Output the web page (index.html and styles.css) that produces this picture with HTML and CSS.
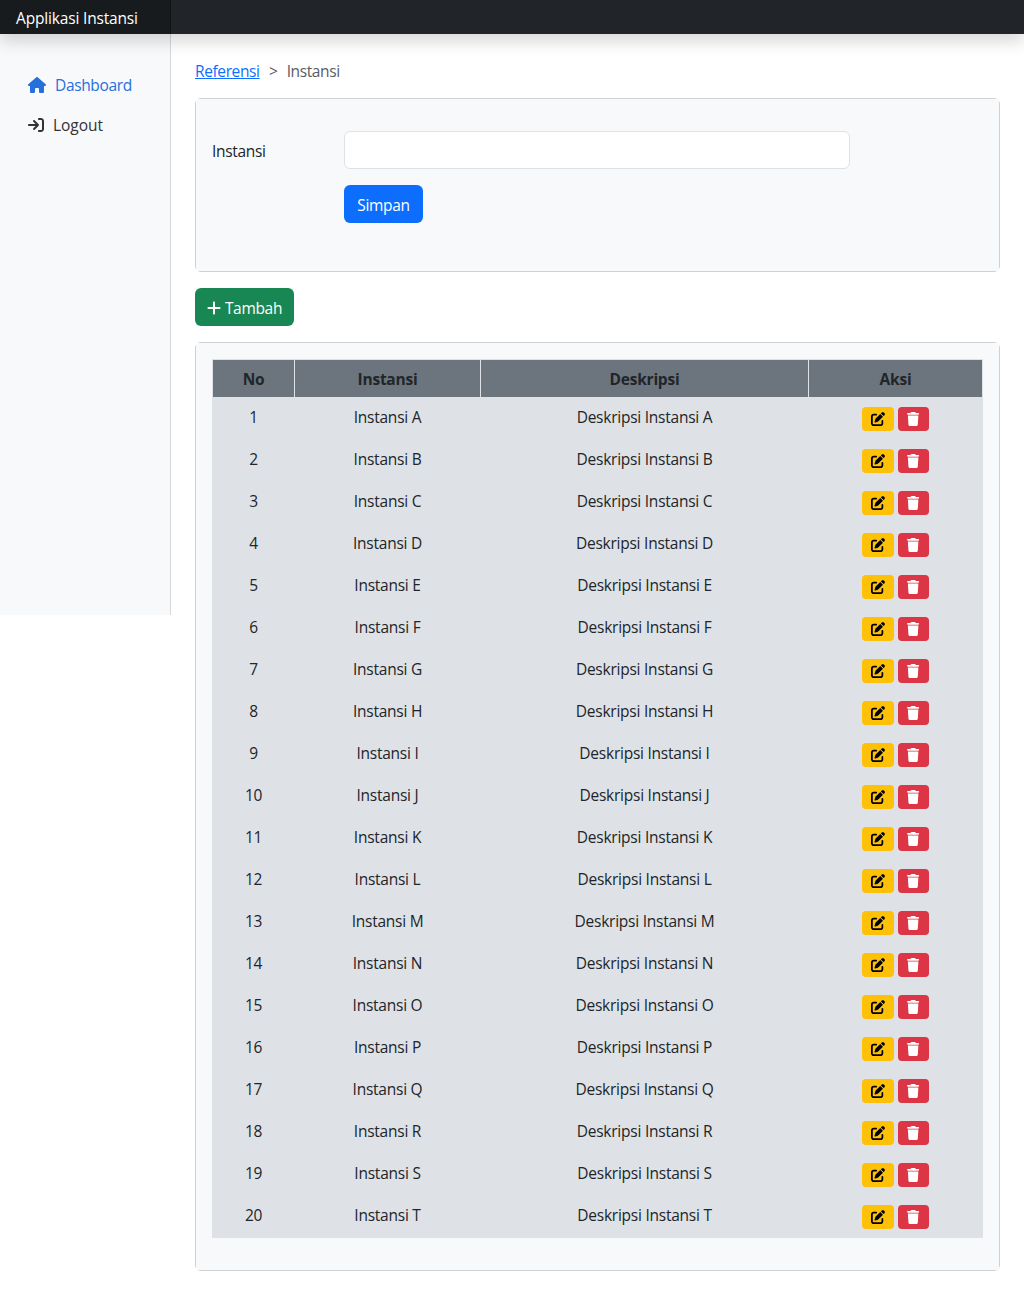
FILE: index.html
```html
<!DOCTYPE html>
<html lang="id">
<head>
<meta charset="utf-8">
<title>Applikasi Instansi</title>
<link rel="stylesheet" href="styles.css">
</head>
<body>
<svg class="symbols" aria-hidden="true">
  <symbol id="house" viewBox="0 0 576 512"><path d="M575.8 255.5c0 18-15 32.100-32 32.100h-32l.7 160.200c0 2.700-.2 5.400-.5 8.100V472c0 22.100-17.900 40-40 40H456c-1.100 0-2.200 0-3.300-.1c-1.400 .1-2.800 .1-4.200 .1H416 392c-22.100 0-40-17.900-40-40V448 384c0-17.700-14.300-32-32-32H256c-17.700 0-32 14.300-32 32v64 24c0 22.100-17.900 40-40 40H160 128.100c-1.500 0-3-.1-4.500-.2c-1.200 .1-2.400 .2-3.600 .2H104c-22.100 0-40-17.900-40-40V360c0-.9 0-1.900 .1-2.800V287.600H32c-18 0-32-14-32-32.100c0-9 3-17 10-24L266.400 8c7-7 15-8 22-8s15 2 21 7L564.800 231.500c8 7 12 15 11 24z"/></symbol>
  <symbol id="login" viewBox="0 0 512 512"><path d="M352 96h64c17.700 0 32 14.300 32 32V384c0 17.700-14.300 32-32 32H352c-17.700 0-32 14.300-32 32s14.300 32 32 32h64c53 0 96-43 96-96V128c0-53-43-96-96-96H352c-17.700 0-32 14.300-32 32s14.300 32 32 32zm-9.400 182.600c12.500-12.500 12.500-32.800 0-45.300l-128-128c-12.500-12.500-32.800-12.500-45.300 0s-12.500 32.800 0 45.300L242.700 224H32c-17.700 0-32 14.300-32 32s14.300 32 32 32H242.700l-73.400 73.400c-12.500 12.500-12.500 32.800 0 45.300s32.800 12.500 45.300 0l128-128z"/></symbol>
  <symbol id="plus" viewBox="0 0 448 512"><path d="M256 80c0-17.700-14.300-32-32-32s-32 14.300-32 32V224H48c-17.700 0-32 14.300-32 32s14.300 32 32 32H192V432c0 17.700 14.300 32 32 32s32-14.300 32-32V288H400c17.700 0 32-14.300 32-32s-14.300-32-32-32H256V80z"/></symbol>
  <symbol id="edit" viewBox="0 0 512 512"><path d="M471.600 21.700c-21.900-21.900-57.300-21.900-79.200 0L362.300 51.700l97.900 97.900 30.100-30.100c21.900-21.900 21.900-57.300 0-79.200L471.600 21.700zm-299.200 220c-6.100 6.100-10.800 13.600-13.500 21.900l-29.600 88.800c-2.900 8.600-.6 18.100 5.800 24.600s15.900 8.700 24.600 5.800l88.800-29.600c8.200-2.700 15.700-7.400 21.900-13.500L437.700 172.300 339.700 74.300 172.400 241.700zM96 64C43 64 0 107 0 160V416c0 53 43 96 96 96H352c53 0 96-43 96-96V320c0-17.700-14.300-32-32-32s-32 14.300-32 32v96c0 17.700-14.300 32-32 32H96c-17.700 0-32-14.300-32-32V160c0-17.700 14.300-32 32-32h96c17.700 0 32-14.300 32-32s-14.300-32-32-32H96z"/></symbol>
  <symbol id="trash" viewBox="0 0 448 512"><path d="M135.200 17.700L128 32H32C14.300 32 0 46.300 0 64S14.300 96 32 96H416c17.700 0 32-14.300 32-32s-14.300-32-32-32H320l-7.200-14.300C307.400 6.800 296.300 0 284.200 0H163.800c-12.100 0-23.200 6.800-28.600 17.700zM416 128H32L53.200 467c1.600 25.300 22.600 45 47.900 45H346.900c25.300 0 46.300-19.700 47.900-45L416 128z"/></symbol>
</svg>

<header class="topbar"><a class="brand">Applikasi Instansi</a></header>

<div class="layout">
  <nav class="sidebar">
    <a class="nav-link active"><svg class="icon house"><use href="#house"/></svg><span>Dashboard</span></a>
    <a class="nav-link"><svg class="icon login"><use href="#login"/></svg><span>Logout</span></a>
  </nav>

  <main class="content">
    <div class="breadcrumb"><a class="crumb-link">Referensi</a><span class="crumb-sep">&gt;</span><span>Instansi</span></div>

    <form class="card form-card">
      <div class="card-body form-body">
        <label class="form-label" for="instansi">Instansi</label>
        <div class="form-fields">
          <input class="form-input" id="instansi" type="text">
          <button class="btn btn-primary" type="button"><span>Simpan</span></button>
        </div>
      </div>
    </form>

    <button class="btn btn-success" type="button"><svg class="icon plus"><use href="#plus"/></svg><span>Tambah</span></button>

    <section class="card table-card">
      <div class="card-body">
        <table class="table">
          <colgroup><col class="col-no"><col class="col-name"><col class="col-desc"><col class="col-action"></colgroup>
          <thead><tr><th>No</th><th>Instansi</th><th>Deskripsi</th><th>Aksi</th></tr></thead>
          <tbody id="rows"></tbody>
        </table>
      </div>
    </section>
  </main>
</div>
<script src="script.js"></script>
</body>
</html>
```
FILE: styles.css
```css
* { box-sizing: border-box; }

body {
  margin: 0;
  background: #fff;
  color: #212529;
  font: 15.5px/24px "Open Sans", "Noto Sans", sans-serif;
  letter-spacing: -0.24px;
}

.symbols { display: none; }

.icon { fill: currentColor; flex: none; display: block; }

.topbar {
  position: relative;
  z-index: 1;
  height: 34px;
  background: #212529;
  box-shadow: 0 8px 16px rgba(0, 0, 0, .15);
}

.brand {
  display: block;
  width: 171px;
  height: 34px;
  padding: 6px 16px 4px;
  background: rgba(0, 0, 0, .25);
  box-shadow: inset -1px 0 0 rgba(0, 0, 0, .25);
  color: #fff;
  letter-spacing: -0.17px;
  white-space: nowrap;
}

.layout { display: flex; align-items: flex-start; }

.sidebar {
  flex: none;
  width: 171px;
  height: 581px;
  padding: 31px 12px 0;
  background: #f8f9fa;
  box-shadow: inset -1px 0 0 rgba(0, 0, 0, .13);
}

.nav-link {
  display: flex;
  align-items: center;
  height: 40px;
  padding: 0 16px;
  color: #333;
}

.nav-link.active { color: #2470dc; letter-spacing: -0.35px; }
.nav-link:not(.active) { letter-spacing: -0.05px; }
.house { width: 18px; height: 16px; margin-right: 9px; }
.login { width: 16px; height: 16px; margin-right: 9px; }

.content { flex: 1; padding: 25px 24px 24px; }

.breadcrumb { display: flex; height: 24px; color: #595c5f; letter-spacing: -0.38px; }
.crumb-link { color: #0d6efd; text-decoration: underline; }
.crumb-sep { width: 27px; text-align: center; }

.card {
  border: 1px solid #cfd0d1;
  border-radius: 6px;
}

.card-body { height: 100%; padding: 16px; background: #f8f9fa; }

.form-card { height: 174px; margin: 15px 0 16px; }
.form-body { display: flex; padding-top: 32px; }

.form-label { width: 132px; padding-top: 8px; letter-spacing: -0.32px; }
.form-fields { width: 506px; }

.form-input {
  display: block;
  width: 100%;
  height: 38px;
  margin-bottom: 16px;
  border: 1px solid #dee2e6;
  border-radius: 6px;
  background: #fff;
}

.btn {
  display: flex;
  align-items: center;
  justify-content: center;
  height: 38px;
  padding: 2px 0 0;
  border: 0;
  border-radius: 6px;
  color: #fff;
  font: inherit;
  letter-spacing: -0.32px;
}

.btn-primary { width: 79px; background: #0d6efd; }
.btn-success { width: 99px; background: #198754; gap: 4px; }
.plus { width: 14px; height: 16px; }

.table-card { height: 929px; margin-top: 16px; }

.table {
  width: 771px;
  table-layout: fixed;
  border-collapse: collapse;
  background: #dee2e6;
  text-align: center;
}

.col-no { width: 82px; }
.col-name { width: 186px; }
.col-desc { width: 328px; }
.col-action { width: 174px; }

th {
  height: 38px;
  padding: 0;
  border: 1px solid #dee2e6;
  background: #6c757d;
  font-weight: 700;
}

td { height: 42px; padding: 7px 0 11px; vertical-align: top; }
td.actions { padding: 9px 0 0; }

.action-group { display: flex; justify-content: center; gap: 4px; }

.btn-sm {
  height: 24px;
  padding: 0;
  border-radius: 4px;
}

.btn-warning { width: 32px; background: #ffc107; color: #000; }
.btn-danger { width: 31px; background: #dc3545; }
.edit { width: 14px; height: 14px; }
.trash { width: 12.25px; height: 14px; }
```
FILE: script.js
```js
const rows = document.getElementById('rows');
rows.innerHTML = [...'ABCDEFGHIJKLMNOPQRST'].map((letter, i) => `
  <tr>
    <td>${i + 1}</td>
    <td>Instansi ${letter}</td>
    <td>Deskripsi Instansi ${letter}</td>
    <td class="actions"><div class="action-group">
      <button class="btn btn-sm btn-warning" type="button" aria-label="Edit"><svg class="icon edit"><use href="#edit"/></svg></button>
      <button class="btn btn-sm btn-danger" type="button" aria-label="Hapus"><svg class="icon trash"><use href="#trash"/></svg></button>
    </div></td>
  </tr>`).join('');
```
